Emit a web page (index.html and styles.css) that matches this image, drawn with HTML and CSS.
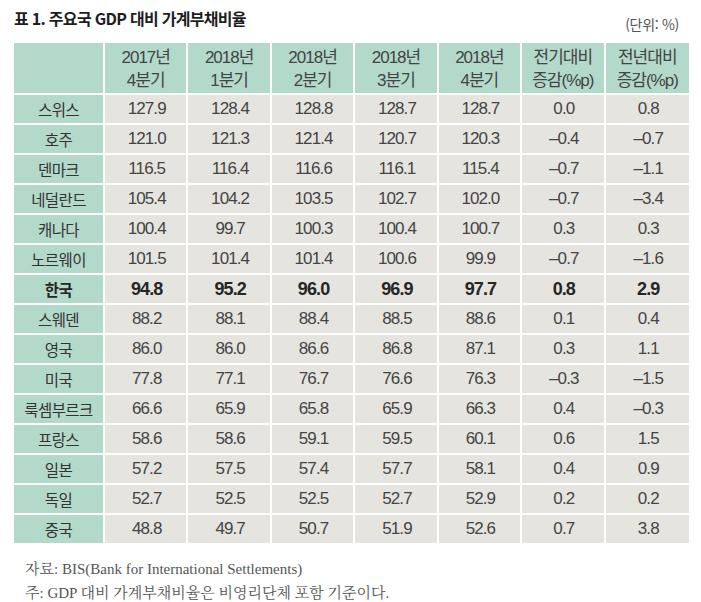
FILE: index.html
```html
<!DOCTYPE html>
<html lang="ko">
<head>
<meta charset="utf-8">
<title>표 1. 주요국 GDP 대비 가계부채비율</title>
<link rel="stylesheet" href="styles.css">
</head>
<body>
<div class="page">
  <div class="head">
    <h1 class="title">표 1. 주요국 GDP 대비 가계부채비율</h1>
    <span class="unit">(단위: %)</span>
  </div>
  <table class="data">
    <colgroup><col class="c-name"><col><col><col><col><col><col><col></colgroup>
    <thead>
      <tr>
        <th></th>
        <th>2017년<br>4분기</th>
        <th>2018년<br>1분기</th>
        <th>2018년<br>2분기</th>
        <th>2018년<br>3분기</th>
        <th>2018년<br>4분기</th>
        <th>전기대비<br>증감(%p)</th>
        <th>전년대비<br>증감(%p)</th>
      </tr>
    </thead>
    <tbody>
      <tr><th>스위스</th><td>127.9</td><td>128.4</td><td>128.8</td><td>128.7</td><td>128.7</td><td>0.0</td><td>0.8</td></tr>
      <tr><th>호주</th><td>121.0</td><td>121.3</td><td>121.4</td><td>120.7</td><td>120.3</td><td>–0.4</td><td>–0.7</td></tr>
      <tr><th>덴마크</th><td>116.5</td><td>116.4</td><td>116.6</td><td>116.1</td><td>115.4</td><td>–0.7</td><td>–1.1</td></tr>
      <tr><th>네덜란드</th><td>105.4</td><td>104.2</td><td>103.5</td><td>102.7</td><td>102.0</td><td>–0.7</td><td>–3.4</td></tr>
      <tr><th>캐나다</th><td>100.4</td><td>99.7</td><td>100.3</td><td>100.4</td><td>100.7</td><td>0.3</td><td>0.3</td></tr>
      <tr><th>노르웨이</th><td>101.5</td><td>101.4</td><td>101.4</td><td>100.6</td><td>99.9</td><td>–0.7</td><td>–1.6</td></tr>
      <tr class="hl"><th>한국</th><td>94.8</td><td>95.2</td><td>96.0</td><td>96.9</td><td>97.7</td><td>0.8</td><td>2.9</td></tr>
      <tr><th>스웨덴</th><td>88.2</td><td>88.1</td><td>88.4</td><td>88.5</td><td>88.6</td><td>0.1</td><td>0.4</td></tr>
      <tr><th>영국</th><td>86.0</td><td>86.0</td><td>86.6</td><td>86.8</td><td>87.1</td><td>0.3</td><td>1.1</td></tr>
      <tr><th>미국</th><td>77.8</td><td>77.1</td><td>76.7</td><td>76.6</td><td>76.3</td><td>–0.3</td><td>–1.5</td></tr>
      <tr><th>룩셈부르크</th><td>66.6</td><td>65.9</td><td>65.8</td><td>65.9</td><td>66.3</td><td>0.4</td><td>–0.3</td></tr>
      <tr><th>프랑스</th><td>58.6</td><td>58.6</td><td>59.1</td><td>59.5</td><td>60.1</td><td>0.6</td><td>1.5</td></tr>
      <tr><th>일본</th><td>57.2</td><td>57.5</td><td>57.4</td><td>57.7</td><td>58.1</td><td>0.4</td><td>0.9</td></tr>
      <tr><th>독일</th><td>52.7</td><td>52.5</td><td>52.5</td><td>52.7</td><td>52.9</td><td>0.2</td><td>0.2</td></tr>
      <tr><th>중국</th><td>48.8</td><td>49.7</td><td>50.7</td><td>51.9</td><td>52.6</td><td>0.7</td><td>3.8</td></tr>
    </tbody>
  </table>
  <div class="notes">
    <p>자료: BIS(Bank for International Settlements)</p>
    <p>주: GDP 대비 가계부채비율은 비영리단체 포함 기준이다.</p>
  </div>
</div>
</body>
</html>
```

FILE: styles.css
```css
html, body {
  margin: 0;
  padding: 0;
  background: #fff;
}

.page {
  width: 701px;
  padding: 0 12px 0 14px;
  box-sizing: border-box;
  font-family: "Liberation Sans", "Noto Sans CJK KR", sans-serif;
  color: #3c3c3c;
}

.head {
  display: flex;
  justify-content: space-between;
  align-items: flex-start;
  height: 43px;
}

.title {
  margin: 7px 0 0 0;
  font-family: "Noto Sans CJK KR", sans-serif;
  font-size: 16px;
  line-height: 22px;
  font-weight: 700;
  letter-spacing: -0.7px;
  color: #1e1e1e;
}

.unit {
  margin: 14px 10px 0 0;
  font-family: "Noto Sans CJK KR", sans-serif;
  font-size: 14px;
  line-height: 20px;
  color: #555;
  letter-spacing: -0.3px;
}

.data {
  width: 675px;
  table-layout: fixed;
  border-collapse: separate;
  border-spacing: 0;
}

.c-name {
  width: 91px;
}

.data th,
.data td {
  box-sizing: border-box;
  height: 30px;
  padding: 0;
  border-right: 2px solid #fff;
  border-bottom: 2px solid #fff;
  text-align: center;
  vertical-align: middle;
  background: #e5e4df;
  font-size: 17px;
  font-weight: 400;
  letter-spacing: -0.9px;
  color: #444;
  line-height: 20px;
}

.data tr > :last-child {
  border-right: none;
}

.data thead th {
  height: 52px;
  background: #b3d9cb;
  font-size: 17px;
  line-height: 23px;
  padding-top: 1px;
  letter-spacing: -1px;
}

.data tbody th {
  background: #b3d9cb;
  font-family: "Noto Sans CJK KR", sans-serif;
  font-size: 15.5px;
  letter-spacing: -0.6px;
  color: #333;
}

.data tbody td {
  padding-left: 2px;
}

.data tr.hl th,
.data tr.hl td {
  font-weight: 700;
  color: #262626;
}

.data tr.hl td {
  font-size: 18px;
}

.notes {
  padding: 12px 0 0 11px;
  font-family: "Liberation Serif", "Noto Serif CJK KR", "Noto Sans CJK KR", serif;
  font-size: 15px;
  color: #555;
}

.notes p {
  margin: 0;
  line-height: 24px;
}
```
